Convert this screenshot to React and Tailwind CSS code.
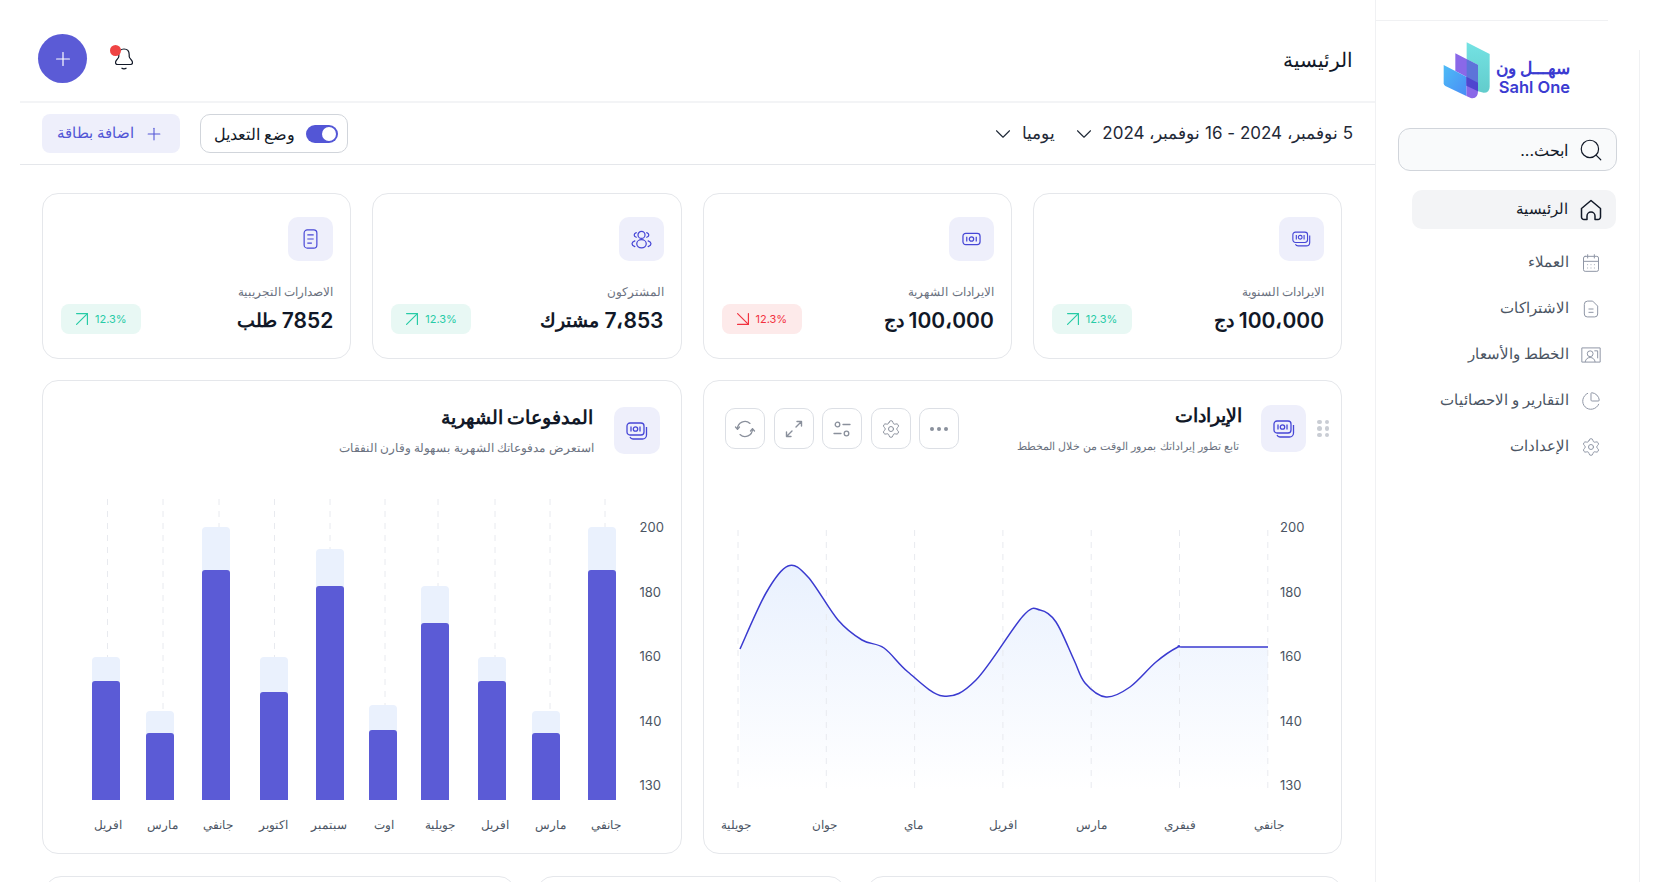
import { ArrowDownRight, ArrowUpRight, CalendarDays, ChevronDown, PieChart, Plus, Search, Settings } from "lucide-react";

const navItems = [
  { label: "العملاء", Icon: CalendarDays },
  { label: "الاشتراكات", Icon: SubsIcon },
  { label: "الخطط والأسعار", Icon: PlansIcon },
  { label: "التقارير و الاحصائيات", Icon: PieChart },
  { label: "الإعدادات", Icon: Settings },
];

const barData = [
  { x: 92, light: 657, dark: 681 },
  { x: 146, light: 711, dark: 733 },
  { x: 202, light: 527, dark: 570 },
  { x: 260, light: 657, dark: 692 },
  { x: 316, light: 549, dark: 586 },
  { x: 369, light: 705, dark: 730 },
  { x: 421, light: 586, dark: 623 },
  { x: 478, light: 657, dark: 681 },
  { x: 532, light: 711, dark: 733 },
  { x: 588, light: 527, dark: 570 },
];
const barGrid = [107.5, 163, 219, 274.5, 330, 385, 438, 495, 550, 605];
const barLabels = ["جانفي", "مارس", "افريل", "جويلية", "اوت", "سبتمبر", "اكتوبر", "جانفي", "مارس", "افريل"];

const lineGrid = [738, 826.3, 914.6, 1002.9, 1091.2, 1179.5, 1267.8];
const lineLabels = ["جانفي", "فيفري", "مارس", "افريل", "ماي", "جوان", "جويلية"];
const linePoints = [
  [740, 649], [766, 593], [788, 566], [808, 577], [838, 620], [862, 640], [884, 648], [908, 672],
  [943, 696], [976, 680], [1023, 616], [1040, 610], [1056, 622], [1074, 660], [1085, 683],
  [1106, 697], [1130, 687], [1156, 662], [1178, 647], [1186, 647], [1268, 647],
];

// catmull-rom to bezier, the chart lib in the real page does the same kind of smoothing
function smoothPath(pts) {
  let d = `M${pts[0][0]} ${pts[0][1]}`;
  for (let i = 0; i < pts.length - 1; i++) {
    const p0 = pts[i - 1] || pts[i];
    const p1 = pts[i];
    const p2 = pts[i + 1];
    const p3 = pts[i + 2] || p2;
    const c1x = p1[0] + (p2[0] - p0[0]) / 6;
    const c1y = p1[1] + (p2[1] - p0[1]) / 6;
    const c2x = p2[0] - (p3[0] - p1[0]) / 6;
    const c2y = p2[1] - (p3[1] - p1[1]) / 6;
    d += ` C${c1x} ${c1y} ${c2x} ${c2y} ${p2[0]} ${p2[1]}`;
  }
  return d;
}

function HomeIcon() {
  return (
    <svg viewBox="0 0 24 24" fill="none" stroke="currentColor" strokeWidth="1.500" strokeLinejoin="round" className="w-[24px] h-[24px]">
      <path d="M2.500 10.500 12 2.500l9.500 8V19a2.500 2.500 0 0 1-2.500 2.500h-3V18a4 4 0 0 0-8 0v3.500H5A2.500 2.500 0 0 1 2.500 19z" />
    </svg>
  );
}

function SubsIcon(props) {
  return (
    <svg viewBox="0 0 24 24" fill="none" stroke="currentColor" strokeWidth="1.400" strokeLinejoin="round" {...props}>
      <path d="M8 2.500h6l6 6V18a3.500 3.500 0 0 1-3.500 3.500h-9A3.500 3.500 0 0 1 4 18V6.500a4 4 0 0 1 4-4z" />
      <path d="M9 12h6M9 16h6" />
    </svg>
  );
}

function PlansIcon(props) {
  return (
    <svg viewBox="0 0 24 24" fill="none" stroke="currentColor" strokeWidth="1.200" {...props}>
      <path d="M1 3.500h22v17H1z" />
      <circle cx="11" cy="10.500" r="3.500" />
      <path d="M5 20.500c.6-3.600 3-5.500 6-5.500s5.400 1.900 6 5.500M16 7h4v9" />
    </svg>
  );
}

function MoneyIcon({ className }) {
  return (
    <svg viewBox="0 0 20 14" fill="none" stroke="currentColor" strokeWidth="1.300" className={className}>
      <rect x="1" y="1" width="18" height="12" rx="3" />
      <circle cx="10" cy="7" r="2.300" />
      <path d="M5 4.500v5M15 4.500v5" />
    </svg>
  );
}

function MoneyStackIcon({ className }) {
  return (
    <svg viewBox="0 0 22 18" fill="none" stroke="currentColor" strokeWidth="1.300" className={className}>
      <rect x="1" y="1" width="17" height="12" rx="3" />
      <circle cx="9.500" cy="7" r="2.200" />
      <path d="M5 4.500v5M14 4.500v5" />
      <path d="M20.500 5v8a4 4 0 0 1-4 4H7a3.500 3.500 0 0 1-3-2" />
    </svg>
  );
}

function UsersIcon({ className }) {
  return (
    <svg viewBox="0 0 22 20" fill="none" stroke="currentColor" strokeWidth="1.300" strokeLinecap="round" className={className}>
      <ellipse cx="11" cy="5.200" rx="3.700" ry="3.700" />
      <ellipse cx="11" cy="14.500" rx="5" ry="4.300" />
      <path d="M5.500 2.800C4 3.300 3.300 4.300 3.300 5.200s.7 1.900 2.200 2.400M16.500 2.800c1.500.5 2.200 1.500 2.200 2.400s-.7 1.900-2.200 2.400" />
      <path d="M4 11.500c-2 .8-3 2-3 3s1 2.200 3 3M18 11.500c2 .8 3 2 3 3s-1 2.200-3 3" />
    </svg>
  );
}

function DocIcon({ className }) {
  return (
    <svg viewBox="0 0 16 22" fill="none" stroke="currentColor" strokeWidth="1.300" className={className}>
      <rect x="1" y="1" width="14" height="20" rx="3.500" />
      <path d="M4.500 6.500h7M4.500 11h7M4.500 15.500h5" />
    </svg>
  );
}

function BellIcon() {
  return (
    <svg viewBox="0 0 18 22" fill="none" stroke="#111827" strokeWidth="1.200" className="w-[18px] h-[22px] block">
      <path d="M9 1c3.400 0 5.200 2.600 5.200 5.800v1.700c0 2 3.300 3.300 3.300 6 0 1.300-.8 2-2 2h-13c-1.200 0-2-.7-2-2 0-2.700 3.300-4 3.300-6V6.800C3.800 3.600 5.600 1 9 1z" />
      <path d="M6.500 20c1.500 1 3.500 1 5 0" />
    </svg>
  );
}

function SyncIcon() {
  return (
    <svg viewBox="0 0 24 24" fill="none" stroke="currentColor" strokeWidth="1.300" strokeLinecap="round" strokeLinejoin="round" className="w-[24px] h-[24px]">
      <path d="M4.500 12A7.500 7.500 0 0 1 17 6.400M19.500 12A7.500 7.500 0 0 1 7 17.600" />
      <path d="M2.500 10l2 2.200 2-2.200M17.500 14l2-2.200 2 2.200" />
    </svg>
  );
}

function ExpandIcon() {
  return (
    <svg viewBox="0 0 24 24" fill="none" stroke="currentColor" strokeWidth="1.400" strokeLinecap="round" strokeLinejoin="round" className="w-[24px] h-[24px]">
      <path d="M14 10l5.500-5.500M15 4.500h4.500V9M10 14l-5.500 5.500M9 19.500H4.500V15" />
    </svg>
  );
}

function FiltersIcon() {
  return (
    <svg viewBox="0 0 24 24" fill="none" stroke="currentColor" strokeWidth="1.300" strokeLinecap="round" className="w-[24px] h-[24px]">
      <circle cx="7.500" cy="7.500" r="2.300" />
      <path d="M13 7.500h7M4 16.500h7" />
      <circle cx="16.500" cy="16.500" r="2.300" />
    </svg>
  );
}

function DotsIcon() {
  return (
    <svg viewBox="0 0 24 24" fill="currentColor" className="w-[24px] h-[24px]">
      <circle cx="5" cy="12" r="2" />
      <circle cx="12" cy="12" r="2" />
      <circle cx="19" cy="12" r="2" />
    </svg>
  );
}

function Logo() {
  return (
    <div dir="ltr" className="flex items-center gap-[4px]">
      <svg viewBox="40 60 150 180" className="w-[50px] h-[60px]">
        <defs>
          <linearGradient id="logoTeal" x1="0" y1="0" x2="0" y2="1">
            <stop offset="0" stopColor="#74e2e3" />
            <stop offset="1" stopColor="#62cccc" />
          </linearGradient>
          <linearGradient id="logoBlue" x1="0" y1="0" x2="1" y2="1">
            <stop offset="0" stopColor="#4dbcf6" />
            <stop offset="1" stopColor="#4a8cf6" />
          </linearGradient>
        </defs>
        <path d="M114 67 183 102V200Q183 218 165 218L148 214V135L114 118Z" fill="url(#logoTeal)" />
        <path d="M80 100 148 135V214Q148 238 126 234L113 228V170L80 153Z" fill="#8a68e8" />
        <path d="M114 118 148 135V205L114 190Z" fill="#5d74d9" />
        <path d="M45 135 113 170V228L50 198Q45 195 45 190Z" fill="url(#logoBlue)" />
        <path d="M113 170 148 188V214L113 197Z" fill="#4f46cf" />
      </svg>
      <div className="flex flex-col items-end text-[#3b3bd1] font-semibold mt-[13px]">
        <span dir="rtl" className="text-[16.500px] leading-[20px]">سهـــل ون</span>
        <span className="text-[16.500px] leading-[18px]">Sahl One</span>
      </div>
    </div>
  );
}

function StatCard({ icon, label, value, unit, down }) {
  return (
    <div className="h-[166px] rounded-[16px] border-[1.5px] border-[#e5e7eb] bg-white pt-[23px] pr-[17px] pl-[18px]">
      <div className="w-[45px] h-[44px] rounded-[10px] bg-[#eeeffb] text-[#4747d6] flex items-center justify-center">{icon}</div>
      <div className="flex items-end justify-between mt-[21px]">
        <div className="flex flex-col">
          <span className="text-[12px] leading-[20px] text-[#6b7280]">{label}</span>
          <span className="text-[21px] leading-[34px] font-semibold text-[#111827] mt-[2px] flex items-center gap-[5px]">
            <span>{value}</span>
            <span className="text-[19px]">{unit}</span>
          </span>
        </div>
        <div
          dir="ltr"
          className={
            down
              ? "w-[80px] h-[30px] rounded-[8px] bg-[#fdeaea] text-[#f2323f] flex items-center pl-[8px] text-[11px] mb-[4px]"
              : "w-[80px] h-[30px] rounded-[8px] bg-[#e8f8f4] text-[#27cba6] flex items-center pl-[8px] text-[11px] mb-[4px]"
          }
        >
          {down ? <ArrowDownRight size={26} strokeWidth={1.100} /> : <ArrowUpRight size={26} strokeWidth={1.100} />}
          <span>12.3%</span>
        </div>
      </div>
    </div>
  );
}

function ToolButton({ children }) {
  return (
    <button className="w-[40px] h-[41px] rounded-[10px] border-[1.5px] border-[#dcdfe5] text-[#8a909c] flex items-center justify-center">
      {children}
    </button>
  );
}

function YAxis() {
  return (
    <div dir="ltr" className="w-[24px] h-[278px] flex flex-col justify-between text-[13px] leading-[20px] text-[#4b5563]">
      <span>200</span>
      <span>180</span>
      <span>160</span>
      <span>140</span>
      <span>130</span>
    </div>
  );
}

export default function App() {
  return (
    <div dir="rtl" className="h-screen overflow-hidden bg-white flex pr-[20px] font-['Inter',sans-serif]">
      {/* thin rail on the outer side */}
      <div className="w-px mt-[50px] bg-[#f0f1f3]" />

      <aside className="w-[264px] shrink-0 border-l border-[#f0f1f3] flex flex-col pt-[20px]">
        <div className="h-px w-[232px] self-end bg-[#f0f1f3]" />
        <div className="pr-[69px] mt-[19px] flex justify-start">
          <Logo />
        </div>
        <div className="mt-[28px] mr-[22px] ml-[22px] h-[43px] rounded-[12px] border border-[#d1d5db] bg-[#f9fafb] flex items-center pr-[12px] gap-[10px] text-[16px] text-[#111827]">
          <Search size={26} strokeWidth={1.100} />
          <span>ابحث...</span>
        </div>
        <nav className="mt-[19px] mr-[23px] flex flex-col">
          <div className="h-[39px] ml-[36px] rounded-[10px] bg-[#f3f4f6] flex items-center pr-[13px] gap-[11px] text-[15px] text-[#111827]">
            <HomeIcon />
            <span>الرئيسية</span>
          </div>
          {navItems.map(({ label, Icon }, i) => (
            <div key={label} className={i === 0 ? "h-[39px] mt-[14px] flex items-center pr-[15px] gap-[12px] text-[15px] text-[#4b5563]" : "h-[39px] mt-[7px] flex items-center pr-[15px] gap-[12px] text-[15px] text-[#4b5563]"}>
              <Icon width={20} height={20} strokeWidth={1.200} className="text-[#9097a6]" />
              <span>{label}</span>
            </div>
          ))}
        </nav>
      </aside>

      <main className="flex-1 ml-[20px] min-w-0">
        <header className="h-[103px] border-b-2 border-[#f3f4f6] flex items-center justify-between pt-[16px] pr-[22px] pl-[18px]">
          <h1 className="text-[20px] font-medium text-[#111827] pt-[2px]">الرئيسية</h1>
          <div className="flex items-center gap-[28px]">
            <div className="relative">
              <BellIcon />
              <span className="absolute -top-[3px] -left-[5px] w-[11px] h-[11px] rounded-full bg-[#ef4444]" />
            </div>
            <button className="w-[49px] h-[49px] rounded-full bg-[#5b5bd6] text-white flex items-center justify-center">
              <Plus size={22} strokeWidth={1.300} />
            </button>
          </div>
        </header>

        <div className="h-[62px] border-b border-[#e5e7eb] flex items-center justify-between px-[22px]">
          <div className="flex items-center text-[17px] text-[#1f2937]">
            <span>5 نوفمبر، 2024 - 16 نوفمبر، 2024</span>
            <ChevronDown size={26} strokeWidth={1} className="mr-[5px]" />
            <span className="mr-[16px]">يوميا</span>
            <ChevronDown size={26} strokeWidth={1} className="mr-[6px]" />
          </div>
          <div className="flex items-center gap-[20px]">
            <div className="w-[148px] h-[39px] rounded-[10px] border border-[#d1d5db] flex items-center pr-[9px] gap-[11px] text-[16px] text-[#111827]">
              <span className="w-[32px] h-[18px] rounded-full bg-[#5356d6] flex items-center pr-[2px]">
                <span className="w-[14px] h-[14px] rounded-full bg-white" />
              </span>
              <span>وضع التعديل</span>
            </div>
            <button className="w-[138px] h-[39px] rounded-[8px] bg-[#eeeffb] text-[#5356d6] flex items-center pr-[16px] gap-[10px] text-[15px]">
              <Plus size={20} strokeWidth={1.300} />
              <span>اضافة بطاقة</span>
            </button>
          </div>
        </div>

        <div className="pt-[28px] pr-[33px] pl-[22px]">
          <div className="grid grid-cols-4 gap-[21px]">
            <StatCard icon={<MoneyStackIcon className="w-[19px] h-[16px]" />} label="الايرادات السنوية" value="100،000" unit="دج" />
            <StatCard icon={<MoneyIcon className="w-[19px] h-[14px]" />} label="الايرادات الشهرية" value="100،000" unit="دج" down />
            <StatCard icon={<UsersIcon className="w-[21px] h-[19px]" />} label="المشتركون" value="7،853" unit="مشترك" />
            <StatCard icon={<DocIcon className="w-[15px] h-[20px]" />} label="الاصدارات التجريبية" value="7852" unit="طلب" />
          </div>

          <div className="grid grid-cols-2 gap-[21px] mt-[21px]">
            <section className="h-[474px] rounded-[16px] border-[1.5px] border-[#e5e7eb]">
              <div className="flex items-center justify-between pt-[20px] pr-[12px] pl-[21.500px]">
                <div className="flex items-center">
                  <div className="grid grid-cols-2 gap-x-[3px] gap-y-[2px] ml-[11px]">
                    {[0, 1, 2, 3, 4, 5].map((i) => (
                      <span key={i} className="w-[4.500px] h-[4.500px] rounded-full bg-[#c9cdd4]" />
                    ))}
                  </div>
                  <div className="w-[45px] h-[47px] rounded-[10px] bg-[#eeeffb] text-[#4747d6] flex items-center justify-center">
                    <MoneyStackIcon className="w-[22px] h-[18px]" />
                  </div>
                  <div className="flex flex-col mr-[19px]">
                    <span className="text-[18.500px] leading-[28px] font-semibold text-[#111827]">الإيرادات</span>
                    <span className="text-[11.300px] leading-[20px] text-[#6b7280] mt-[7px] mr-[3px]">تابع تطور إيراداتك بمرور الوقت من خلال المخطط</span>
                  </div>
                </div>
                <div className="flex gap-[8.500px]">
                  <ToolButton><DotsIcon /></ToolButton>
                  <ToolButton><Settings size={20} strokeWidth={1.200} /></ToolButton>
                  <ToolButton><FiltersIcon /></ToolButton>
                  <ToolButton><ExpandIcon /></ToolButton>
                  <ToolButton><SyncIcon /></ToolButton>
                </div>
              </div>
              <div className="flex items-start pr-[37px] mt-[61px]">
                <YAxis />
                <svg viewBox="720 517 561 283" className="w-[561px] h-[283px] -mr-[1px]">
                  <defs>
                    <linearGradient id="areaFill" x1="0" y1="0" x2="0" y2="1">
                      <stop offset="0" stopColor="#e9f1fe" />
                      <stop offset="1" stopColor="#ffffff" />
                    </linearGradient>
                  </defs>
                  <path d={`${smoothPath(linePoints)} L1268 790 L740 790 Z`} fill="url(#areaFill)" />
                  {lineGrid.map((x) => (
                    <line key={x} x1={x} x2={x} y1="530" y2="788" stroke="#e8eaef" strokeWidth="1" strokeDasharray="6 6" />
                  ))}
                  <path d={smoothPath(linePoints)} fill="none" stroke="#3a3ad0" strokeWidth="1.500" />
                </svg>
              </div>
              <div className="flex justify-between pr-[42px] pl-[2.500px] mt-[15px] text-[12px] leading-[20px] text-[#4b5563]">
                {lineLabels.map((m) => (
                  <span key={m} className="w-[60px] text-center">{m}</span>
                ))}
              </div>
            </section>

            <section className="h-[474px] rounded-[16px] border-[1.5px] border-[#e5e7eb]">
              <div className="flex items-center pt-[22px] pr-[21px]">
                <div className="w-[46px] h-[47px] rounded-[10px] bg-[#eeeffb] text-[#4747d6] flex items-center justify-center">
                  <MoneyStackIcon className="w-[22px] h-[18px]" />
                </div>
                <div className="flex flex-col mr-[20px]">
                  <span className="text-[18.500px] leading-[28px] font-semibold text-[#111827]">المدفوعات الشهرية</span>
                  <span className="text-[12px] leading-[20px] text-[#6b7280] mt-[7px]">استعرض مدفوعاتك الشهرية بسهولة وقارن النفقات</span>
                </div>
              </div>
              <div className="flex items-start pr-[17px] mt-[41px]">
                <div className="mt-[18px]">
                  <YAxis />
                </div>
                <svg viewBox="80 499 560 301" className="w-[560px] h-[301px]">
                  {barGrid.map((x) => (
                    <line key={x} x1={x} x2={x} y1="499" y2="780" stroke="#e8eaef" strokeWidth="1" strokeDasharray="6 6" />
                  ))}
                  {barData.map((b) => (
                    <g key={b.x}>
                      <path d={`M${b.x} 800V${b.light + 4}q0 -4 4 -4h20q4 0 4 4V800z`} fill="#eaf1fd" />
                      <path d={`M${b.x} 800V${b.dark + 3}q0 -3 3 -3h22q3 0 3 3V800z`} fill="#5b5bd6" />
                    </g>
                  ))}
                </svg>
              </div>
              <div className="flex justify-between pr-[50px] pl-[39.500px] mt-[15px] text-[12px] leading-[20px] text-[#4b5563]">
                {barLabels.map((m, i) => (
                  <span key={i} className="w-[50px] text-center">{m}</span>
                ))}
              </div>
            </section>
          </div>

          <div className="grid grid-cols-[475px_308px_470px] gap-[22px] mt-[22px]">
            <div className="h-[100px] rounded-[16px] border-[1.5px] border-[#e5e7eb]" />
            <div className="h-[100px] rounded-[16px] border-[1.5px] border-[#e5e7eb]" />
            <div className="h-[100px] rounded-[16px] border-[1.5px] border-[#e5e7eb]" />
          </div>
        </div>
      </main>
    </div>
  );
}
